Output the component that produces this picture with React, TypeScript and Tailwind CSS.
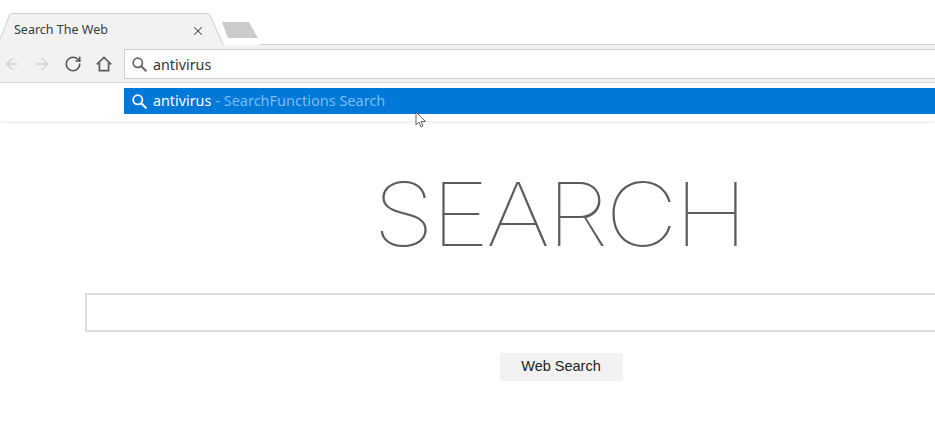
import { ArrowLeft, ArrowRight, RotateCw, X } from "lucide-react";

const UI_FONT = "font-['Noto_Sans','Open_Sans',sans-serif]";

function HomeIcon() {
  return (
    <svg width="16" height="16" viewBox="0 0 16 16" fill="none" stroke="#5a5a5a" strokeWidth="1.7" strokeLinejoin="miter">
      <path d="M.8 8.400 8 1.500l7.200 6.900" />
      <path d="M3.400 7v7.600h9.200V7" />
    </svg>
  );
}

function SearchIcon({ color }: { color: string }) {
  return (
    <svg width="15" height="15" viewBox="0 0 15 15" fill="none" stroke={color} strokeWidth="1.700" strokeLinecap="round">
      <circle cx="5.800" cy="5.800" r="4.600" />
      <path d="M9.300 9.300 13.800 13.800" strokeWidth="2" />
    </svg>
  );
}

function TabStrip() {
  return (
    <div className="flex h-[45px] items-end bg-white">
      {/* tab */}
      <div className="relative h-[32px] w-[224px] shrink-0">
        <svg className="absolute inset-0" width="224" height="32" viewBox="0 0 224 32" fill="none">
          <path d="M0 26 9.500 2Q10.300 .5 12 .5H207q2 0 2.800 1.500L223 31H224V32H0Z" fill="#f2f2f2" />
          <path d="M0 26 9.500 2Q10.300 .5 12 .5H207q2 0 2.800 1.500L223 31H224" stroke="#d0d0d0" />
        </svg>
        <div className={`relative flex h-full items-center pl-[14px] pr-[19px] pt-[3px] text-[12.500px] text-[#3a3a3a] ${UI_FONT}`}>
          <span className="flex-1">Search The Web</span>
          <X size={14} strokeWidth={1.800} color="#444" />
        </div>
      </div>
      {/* new tab button */}
      <svg className="mb-[6px] -ml-[3px] shrink-0" width="38" height="18" viewBox="0 0 38 18">
        <path d="M1 1h26q1 0 1.500 1L37 17H8q-1 0-1.500-1Z" fill="#cbcbcb" />
      </svg>
      <div className="h-px flex-1 self-end bg-[#d4d4d4]" />
    </div>
  );
}

function Toolbar() {
  return (
    <div className="flex h-[38px] items-center border-b border-[#dcdcdc] bg-[#f2f2f2] pt-[1px]">
      <div className="flex w-[124px] shrink-0 items-center pl-[3px]">
        <ArrowLeft size={18} strokeWidth={1.700} color="#d2d2d2" />
        <ArrowRight size={18} strokeWidth={1.700} color="#d2d2d2" className="ml-[12px]" />
        <RotateCw size={18} strokeWidth={2.100} color="#555" className="ml-[13px]" />
        <span className="ml-[14px]"><HomeIcon /></span>
      </div>
      <div className={`flex h-[30px] flex-1 items-center border border-r-0 border-[#cfcfcf] bg-white pl-[7px] text-[14.300px] text-[#333] ${UI_FONT}`}>
        <SearchIcon color="#666" />
        <span className="ml-[6px] pt-[2px]">antivirus</span>
      </div>
    </div>
  );
}

function Suggestions() {
  return (
    <div className="relative h-[38px] bg-white pl-[124px] pt-[5px] shadow-[0_2px_3px_rgba(0,0,0,0.07)]">
      <div className={`flex h-[26px] items-center bg-[#0078d7] pl-[8px] text-[14.300px] ${UI_FONT}`}>
        <SearchIcon color="#fff" />
        <span className="ml-[6px] text-white">antivirus</span>
        <span className="ml-[4px] text-[14.500px] text-[#7cbcf0]">- SearchFunctions Search</span>
      </div>
    </div>
  );
}

export default function App() {
  return (
    <div className="relative h-[432px] w-[935px] overflow-hidden bg-white">
      <TabStrip />
      <Toolbar />
      <Suggestions />

      <main className="flex w-[1122px] flex-col items-center">
        <h1 className="mt-[37px] h-[112px] scale-x-[1.140] pr-[4px] text-[88px] leading-[112px] font-[130] tracking-[-3px] text-[#5c5c5c] font-['Inter',sans-serif]">
          SEARCH
        </h1>
        <input className="mt-[23px] h-[39px] w-[952px] shrink-0 border-2 border-[#dcdcdc] bg-white" />
        <button className="mt-[21px] h-[28px] w-[123px] bg-[#f2f2f2] text-[14.500px] text-[#222] font-['Liberation_Sans',sans-serif]">
          Web Search
        </button>
      </main>

      {/* mouse cursor */}
      <svg className="absolute left-[415px] top-[111px]" width="12" height="18" viewBox="0 0 12 18">
        <path d="M1 1v13l3-3 2 5 2-1-2-4.500h4.500Z" fill="#fff" stroke="#555" strokeWidth="0.900" />
      </svg>
    </div>
  );
}
